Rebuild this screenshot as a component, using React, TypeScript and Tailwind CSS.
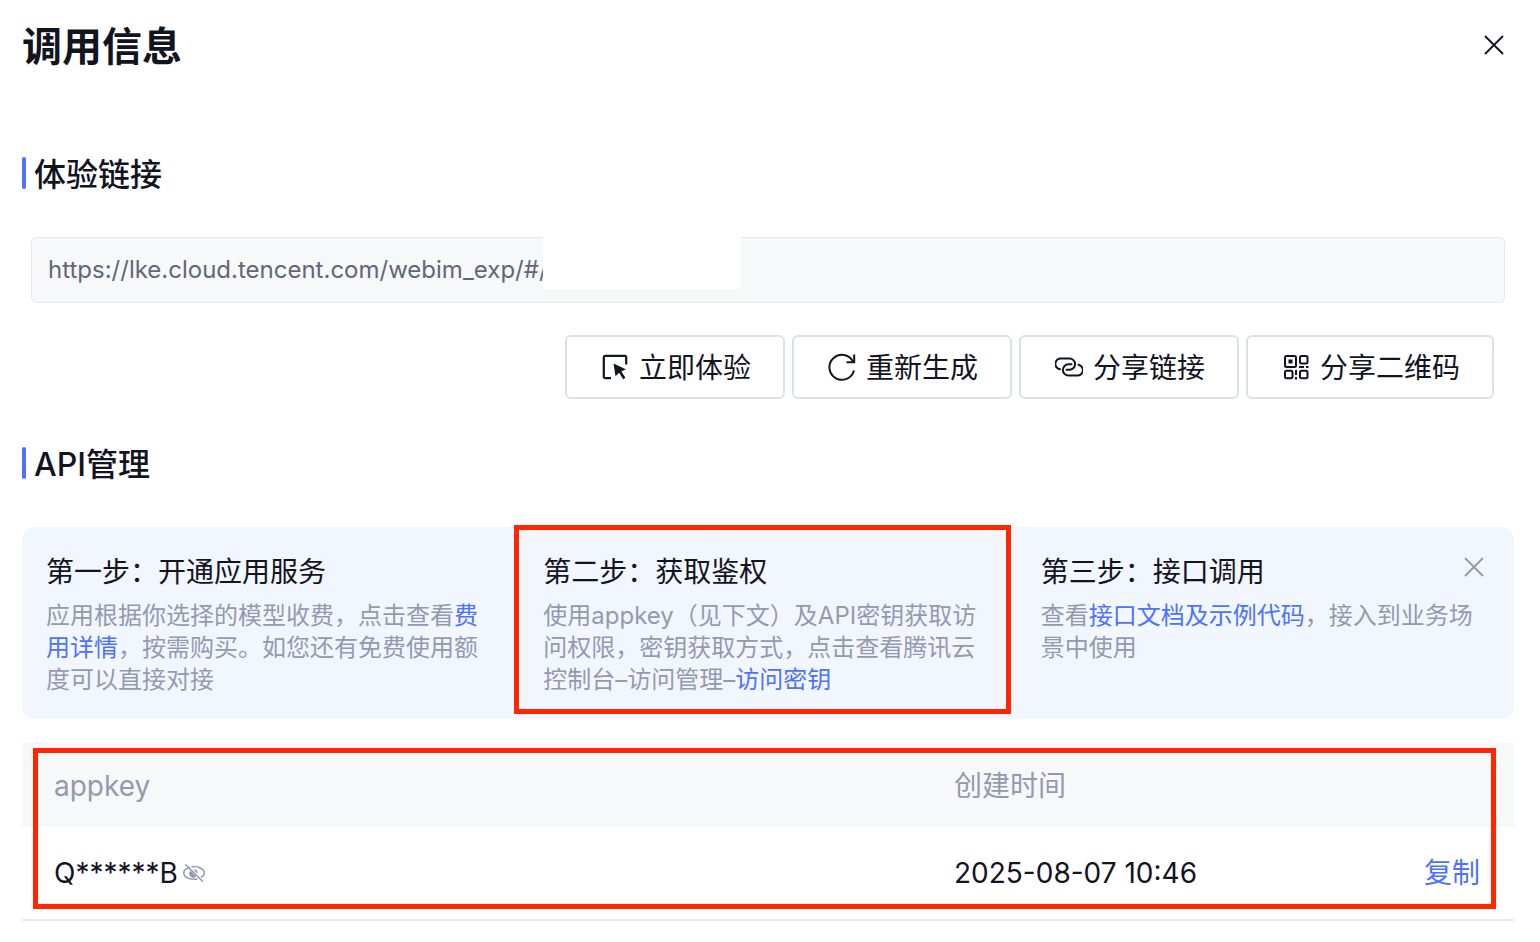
import { useState, type ReactNode } from 'react';

type IconProps = {
  className?: string;
};

const CloseIcon = ({ className }: IconProps) => (
  <svg viewBox="0 0 20 20" fill="none" stroke="currentColor" className={className} aria-hidden="true">
    <path d="M1 1L19 19M19 1L1 19" strokeWidth="1.9" />
  </svg>
);

const TryIcon = () => (
  <svg viewBox="0 0 28 28" fill="none" stroke="currentColor" className="size-7" aria-hidden="true">
    <path d="M10 25.2H4.3C3.4 25.2 2.8 24.6 2.8 23.7V4.3C2.8 3.400 3.400 2.800 4.300 2.800H23.700C24.600 2.800 25.200 3.400 25.200 4.300V11.500" strokeWidth="2.2" />
    <path d="M12.500 10.400L24.800 16.200L20.400 18.500L24.400 24.800L22.200 26.200L18.200 19.800L14.500 23.200Z" fill="currentColor" stroke="none" />
  </svg>
);

const RefreshIcon = () => (
  <svg viewBox="0 0 28 28" fill="none" stroke="currentColor" className="size-7" aria-hidden="true">
    <path d="M26 17.5A12.500 12.500 0 1 1 25 8.500" strokeWidth="2" />
    <path d="M26.200 1.500V9.200H18.500" strokeWidth="2" />
  </svg>
);

const LinkIcon = () => (
  <svg viewBox="0 0 28 28" fill="none" stroke="currentColor" className="size-7" aria-hidden="true">
    <path d="M5 16.2A5.400 5.400 0 0 1 6.500 5.500H14.500A5.600 5.600 0 0 1 14.500 16.700H11.500" strokeWidth="2" strokeLinecap="round" />
    <path d="M23.500 11.800A5.400 5.400 0 0 1 21.500 22.500H13.500A5.600 5.600 0 0 1 13.500 11.300H16.500" strokeWidth="2" strokeLinecap="round" />
  </svg>
);

const QrIcon = () => (
  <svg viewBox="0 0 28 28" fill="none" stroke="currentColor" className="size-7" aria-hidden="true">
    <rect x="3" y="3" width="11" height="11" rx="1.5" strokeWidth="2" />
    <rect x="18" y="3" width="7.500" height="7.500" rx="1.500" strokeWidth="2" />
    <rect x="3" y="17.700" width="7.500" height="7.500" rx="1.500" strokeWidth="2" />
    <rect x="18" y="17.700" width="7.500" height="7.500" rx="1.500" strokeWidth="2" />
    <path d="M6.500 6.500H10.500V10.500H6.500ZM17 13H22V15H17ZM24 13H26.500V15H24ZM13 17H15V22H13ZM13 24H15V26.500H13Z" fill="currentColor" stroke="none" />
  </svg>
);

const EyeOffIcon = () => (
  <svg viewBox="0 0 24 20" fill="none" stroke="currentColor" className="h-5 w-6" aria-hidden="true">
    <path d="M8 4.300C3.500 5.600 1.700 8 1.700 10C1.700 13 6 16.300 12 16.300C13.300 16.300 14.500 16.100 15.500 15.900M9.500 3.700C16 2.600 22.300 6.200 22.300 10C22.300 11.800 20.800 13.300 19 14.400" strokeWidth="1.500" />
    <path d="M3.500 1.500L21 18.800" strokeWidth="1.600" />
    <path d="M8.500 7.800A4 4 0 0 0 14.300 13.600ZM11.500 6.200A4 4 0 0 1 15.800 10.400L14 9.500Z" fill="currentColor" stroke="none" />
  </svg>
);

const actions = [
  { label: '立即体验', icon: <TryIcon /> },
  { label: '重新生成', icon: <RefreshIcon /> },
  { label: '分享链接', icon: <LinkIcon /> },
  { label: '分享二维码', icon: <QrIcon /> },
];

const keys = [{ masked: 'Q******B', createdAt: '2025-08-07 10:46' }];

function SectionTitle({ children }: { children: ReactNode }) {
  return (
    <div className="flex items-center gap-2">
      <span className="h-8 w-1 rounded-xs bg-[#4d72ff]" />
      <h2 className="pt-1 text-[32px] leading-11 font-medium">{children}</h2>
    </div>
  );
}

function StepLink({ children }: { children: ReactNode }) {
  return (
    <a href="#" className="text-[#4d72ff]">
      {children}
    </a>
  );
}

type StepProps = {
  title: string;
  highlighted?: boolean;
  children: ReactNode;
};

function Step({ title, highlighted, children }: StepProps) {
  return (
    <li className="relative px-6 pt-[25px] pb-[23px]">
      <h3 className="text-[28px] leading-10">{title}</h3>
      <p className="mt-2 text-2xl leading-8 text-[#939ab0]">{children}</p>
      {highlighted && (
        <span className="pointer-events-none absolute -top-0.5 right-1.5 bottom-[5px] -left-[5px] border-5 border-[#ff2600]" />
      )}
    </li>
  );
}

export default function App() {
  const [showSteps, setShowSteps] = useState(true);

  return (
    <main className="min-h-screen bg-white pt-[17px] pr-[26px] pb-5 pl-[22px] font-['Inter','Noto_Sans_CJK_SC',sans-serif] text-[#12141f]">
      <header className="flex items-center justify-between pr-2.5">
        <h1 className="pt-1 text-[40px] leading-13 font-semibold">调用信息</h1>
        <button type="button" aria-label="关闭">
          <CloseIcon className="size-5" />
        </button>
      </header>

      <section className="mt-19">
        <SectionTitle>体验链接</SectionTitle>

        <div className="relative mx-[9px] mt-10">
          <input
            type="text"
            readOnly
            aria-label="体验链接"
            value="https://lke.cloud.tencent.com/webim_exp/#/"
            className="block h-[66px] w-full rounded-md border border-[#e3e6ec] bg-[#f7f8fa] px-4 pb-0.5 text-2xl text-[#626679] outline-none"
          />
          <span className="absolute top-0 left-[512px] h-[52px] w-[198px] bg-white" />
        </div>

        <div className="mt-8 mr-5 flex justify-end gap-[7px]">
          {actions.map(action => (
            <button
              key={action.label}
              type="button"
              className="flex h-16 items-center gap-2.5 rounded-md border-2 border-[#dde0e7] pr-8 pl-[34px] text-[28px] leading-10"
            >
              {action.icon}
              <span className="pt-0.5">{action.label}</span>
            </button>
          ))}
        </div>
      </section>

      <section className="mt-10">
        <SectionTitle>API管理</SectionTitle>

        {showSteps && (
          <div className="relative mt-10 rounded-xl bg-[#f2f6ff]">
            <ol className="grid grid-cols-3">
              <Step title="第一步：开通应用服务">
                应用根据你选择的模型收费，点击查看<StepLink>费用详情</StepLink>
                ，按需购买。如您还有免费使用额度可以直接对接
              </Step>
              <Step title="第二步：获取鉴权" highlighted>
                使用appkey（见下文）及API密钥获取访问权限，密钥获取方式，点击查看腾讯云控制台–访问管理–
                <StepLink>访问密钥</StepLink>
              </Step>
              <Step title="第三步：接口调用">
                查看<StepLink>接口文档及示例代码</StepLink>，接入到业务场景中使用
              </Step>
            </ol>
            <button
              type="button"
              aria-label="收起步骤"
              onClick={() => setShowSteps(false)}
              className="absolute top-[30px] right-[30px] text-[#939ab0]"
            >
              <CloseIcon className="size-5" />
            </button>
          </div>
        )}

        <div className="relative mt-6">
          <table className="w-full table-fixed text-left text-[28px] leading-10">
            <thead className="bg-[#f7f8fa] text-[#939ab0]">
              <tr className="h-[84px]">
                <th className="w-[900px] px-8 pt-0.5 font-normal">appkey</th>
                <th className="px-8 pt-0.5 font-normal">创建时间</th>
                <th className="w-40 px-8" aria-label="操作" />
              </tr>
            </thead>
            <tbody>
              {keys.map(item => (
                <tr key={item.masked} className="h-[93px] border-b-2 border-[#e7e9ef]">
                  <td className="px-8">
                    <div className="flex items-center gap-1">
                      {item.masked}
                      <button type="button" aria-label="显示 appkey" className="text-[#939ab0]">
                        <EyeOffIcon />
                      </button>
                    </div>
                  </td>
                  <td className="px-8">{item.createdAt}</td>
                  <td className="pr-[34px] text-right">
                    <button type="button" className="text-[#4d72ff]">
                      复制
                    </button>
                  </td>
                </tr>
              ))}
            </tbody>
          </table>
          <span className="pointer-events-none absolute top-[5px] right-[18px] bottom-3 left-[11px] border-5 border-[#ff2600]" />
        </div>
      </section>
    </main>
  );
}
